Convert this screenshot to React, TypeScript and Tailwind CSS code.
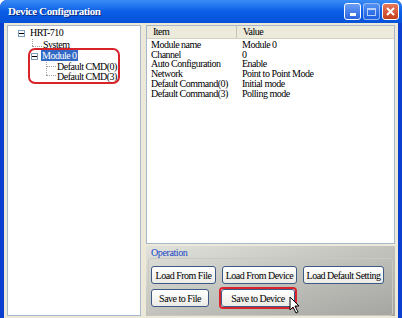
import React from "react";

const serif = { fontFamily: '"Liberation Serif", "Times New Roman", serif' };

function Btn({ label, w, highlight }: { label: string; w: string; highlight?: boolean }) {
  const inner = (
    <div
      className={`${w} h-[18px] flex items-center justify-center whitespace-nowrap rounded-[3px] border border-[#3c5a86] bg-gradient-to-b from-white to-[#ecebe6] text-[10px] tracking-[-0.5px] text-black`}
      style={serif}
    >
      {label}
    </div>
  );
  if (highlight)
    return <div className="rounded-[4px] border-2 border-[#d8232a] bg-[#fbf6d8]">{inner}</div>;
  return inner;
}

const rows: [string, string][] = [
  ["Module name", "Module 0"],
  ["Channel", "0"],
  ["Auto Configuration", "Enable"],
  ["Network", "Point to Point Mode"],
  ["Default Command(0)", "Initial mode"],
  ["Default Command(3)", "Polling mode"],
];

export default function App() {
  return (
    <div className="w-[402px] h-[318px] flex flex-col bg-[#0a3fd0] overflow-hidden rounded-t-[7px]" style={serif}>
      {/* Title bar */}
      <div className="h-[23px] shrink-0 flex items-center justify-between pl-[8px] pr-[3px] bg-gradient-to-b from-[#3a8cf5] via-[#0a5ee6] to-[#0652d8]">
        <span className="text-white font-bold text-[11px] tracking-[-0.4px] whitespace-nowrap" style={{ textShadow: "1px 1px #0a2a80" }}>
          Device Configuration
        </span>
        <div className="flex gap-[2px]">
          <div className="w-[17px] h-[17px] rounded-[3px] border border-white bg-gradient-to-b from-[#6d9ef5] to-[#2a62e0] flex items-end justify-center pb-[3px]">
            <div className="w-[6px] h-[3px] bg-white" />
          </div>
          <div className="w-[17px] h-[17px] rounded-[3px] border border-white/70 bg-gradient-to-b from-[#6d9ef5] to-[#2a62e0] opacity-70 flex items-center justify-center">
            <div className="w-[9px] h-[8px] border border-white border-t-2" />
          </div>
          <div className="w-[17px] h-[17px] rounded-[3px] border border-white bg-gradient-to-b from-[#e8785a] to-[#c33f1a] flex items-center justify-center">
            <svg width="9" height="9" viewBox="0 0 9 9">
              <path d="M1 1 L8 8 M8 1 L1 8" stroke="white" strokeWidth="2" />
            </svg>
          </div>
        </div>
      </div>
      {/* Body */}
      <div className="flex-1 mx-[4px] mb-[5px] bg-[#ece9d8] flex gap-[5px] pt-[2px] pb-[2px] pl-[3px] pr-[3px]">
        {/* Tree */}
        <div className="w-[134px] bg-white border border-[#a8b8cc] relative text-[10px] tracking-[-0.5px] text-black whitespace-nowrap">
          <div className="absolute left-[10px] top-[4px] w-[7px] h-[7px] border border-[#7f9db9] bg-white flex items-center justify-center">
            <div className="w-[5px] h-px bg-black" />
          </div>
          <div className="absolute left-[22px] top-[1px] leading-[12px]">HRT-710</div>
          {/* lines */}
          <div className="absolute left-[24px] top-[13px] w-px h-[7px] border-l border-dotted border-[#a0a0a0]" />
          <div className="absolute left-[24px] top-[20px] w-[10px] h-px border-t border-dotted border-[#a0a0a0]" />
          <div className="absolute left-[35px] top-[14px] leading-[10px]">System</div>
          <div className="absolute left-[23px] top-[27px] w-[7px] h-[7px] border border-[#7f9db9] bg-white flex items-center justify-center">
            <div className="w-[5px] h-px bg-black" />
          </div>
          <div className="absolute left-[33px] top-[24px] h-[11px] px-[1px] bg-[#316ac5] text-white leading-[11px]">Module 0</div>
          <div className="absolute left-[38px] top-[36px] w-px h-[13px] border-l border-dotted border-[#a0a0a0]" />
          <div className="absolute left-[38px] top-[40px] w-[10px] h-px border-t border-dotted border-[#a0a0a0]" />
          <div className="absolute left-[38px] top-[49px] w-[10px] h-px border-t border-dotted border-[#a0a0a0]" />
          <div className="absolute left-[49px] top-[36px] leading-[9px]">Default CMD(0)</div>
          <div className="absolute left-[49px] top-[46px] leading-[9px]">Default CMD(3)</div>
          <div className="absolute left-[20px] top-[22px] w-[92px] h-[36px] rounded-[7px] border-2 border-[#d8232a]" />
        </div>
        {/* Right side */}
        <div className="flex-1 flex flex-col gap-[2px]">
          <div className="h-[219px] bg-white border border-[#a8b8cc] text-[10px] tracking-[-0.5px] text-black whitespace-nowrap">
            <div className="h-[13px] flex bg-[#ebeadb] border-b border-[#d6d2c2] leading-[12px]">
              <div className="w-[90px] pl-[6px] border-r border-[#c7c5b2]">Item</div>
              <div className="flex-1 pl-[6px]">Value</div>
            </div>
            <div className="pt-[1px] pl-[4px] leading-[9.7px]">
              {rows.map(([a, b]) => (
                <div key={a} className="flex">
                  <div className="w-[91px]">{a}</div>
                  <div>{b}</div>
                </div>
              ))}
            </div>
          </div>
          <div className="flex-1 relative bg-gradient-to-br from-[#e2e2dc] to-[#a4a4a0] pt-[1px] px-[2px]">
            <div className="text-[10px] tracking-[-0.4px] text-[#1747c8] pl-[3px] leading-[11px]">Operation</div>
            <div className="border border-[#c9c9c0] rounded-[3px] h-[58px] pl-[2px] pt-[7px] flex flex-col gap-[3px]">
              <div className="flex gap-[6px]">
                <Btn label="Load From File" w="w-[65px]" />
                <Btn label="Load From Device" w="w-[75px]" />
                <Btn label="Load Default Setting" w="w-[81px]" />
              </div>
              <div className="flex gap-[10px] items-center">
                <Btn label="Save to File" w="w-[58px]" />
                <Btn label="Save to Device" w="w-[74px]" highlight />
              </div>
            </div>
            <svg className="absolute left-[143px] top-[50px]" width="12" height="18" viewBox="0 0 12 18">
              <path d="M1 1 L1 14 L4 11 L7 17 L9 16 L6 10 L10 10 Z" fill="white" stroke="black" strokeWidth="1" />
            </svg>
          </div>
        </div>
      </div>
    </div>
  );
}
